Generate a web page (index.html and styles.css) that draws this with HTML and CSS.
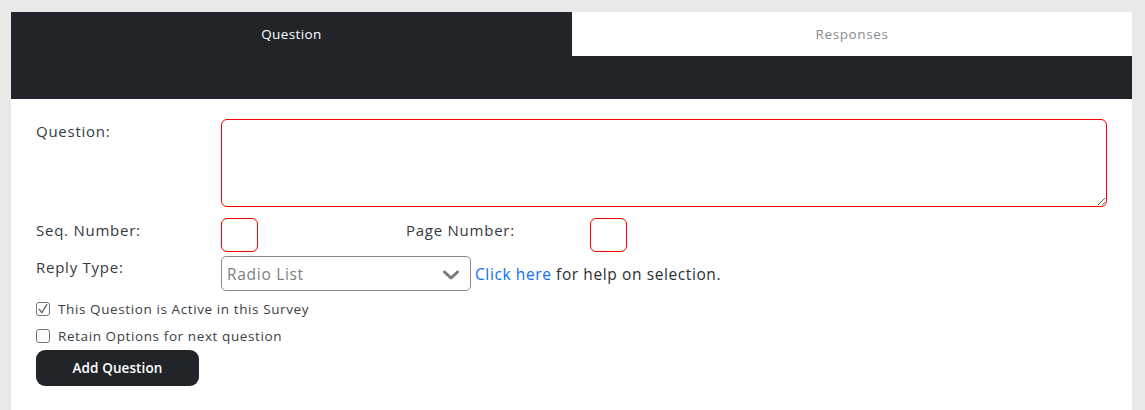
FILE: index.html
```html
<!DOCTYPE html>
<html>
<head>
<meta charset="utf-8">
<link rel="stylesheet" href="styles.css">
</head>
<body>
<div class="card">
  <div class="tabs">
    <div class="tab active">Question</div>
    <div class="tab">Responses</div>
  </div>
  <div class="form">
    <div class="row row-question">
      <label class="lbl">Question:</label>
      <textarea class="field textarea"></textarea>
    </div>
    <div class="row row-nums">
      <label class="lbl">Seq. Number:</label>
      <input class="field small" type="text">
      <label class="lbl lbl-page">Page Number:</label>
      <input class="field small" type="text">
    </div>
    <div class="row row-reply">
      <label class="lbl">Reply Type:</label>
      <div class="select">
        <span class="select-text">Radio List</span>
        <svg class="chev" width="18" height="12" viewBox="0 0 18 12"><path d="M2.5 3 L9 9 L15.5 3" fill="none" stroke="#7a7a7a" stroke-width="3" stroke-linecap="round" stroke-linejoin="round"/></svg>
      </div>
      <span class="help"><a class="link">Click here</a> for help on selection.</span>
    </div>
    <div class="check">
      <span class="box"><svg width="14" height="14" viewBox="0 0 14 14"><path d="M3.2 7.2 L5.8 10.6 L10.8 2.6" fill="none" stroke="#6b6b6b" stroke-width="1.4" stroke-linecap="round" stroke-linejoin="round"/></svg></span>
      <span class="check-text">This Question is Active in this Survey</span>
    </div>
    <div class="check">
      <span class="box"></span>
      <span class="check-text">Retain Options for next question</span>
    </div>
    <button class="btn">Add Question</button>
  </div>
</div>
</body>
</html>
```
FILE: styles.css
```css
* { box-sizing: border-box; }
html, body { margin: 0; height: 100%; }
body {
  background: #e9e9e9;
  padding: 12px 13px 0 11px;
  font-family: "Open Sans", "Noto Sans", sans-serif;
  color: #333a40;
}
.card {
  background: #fff;
  height: 100%;
}
.tabs {
  display: grid;
  grid-template-columns: 561px 1fr;
  background: #212529;
  height: 87px;
  align-items: start;
}
.tab {
  height: 44px;
  line-height: 44px;
  text-align: center;
  font-size: 13.5px;
  letter-spacing: 0.6px;
  color: #888c90;
}
.tab.active { color: #fff; font-weight: 500; letter-spacing: 0.4px; }
.tab:not(.active) { background: #fff; }
.form {
  padding: 20px 25px 0 25px;
}
.row { display: flex; align-items: flex-start; }
.lbl {
  width: 185px;
  font-size: 15px;
  letter-spacing: 0.75px;
  color: #343a40;
  padding-top: 2px;
}
.lbl-page { width: 184px; margin-left: 148px; }
.field {
  border: 1px solid #ff0000;
  border-radius: 6px;
  background: #fff;
  font-family: inherit;
  outline: none;
}
.textarea {
  flex: 1;
  height: 88px;
  resize: vertical;
  display: block;
}
.row-nums { margin-top: 11px; }
.small { width: 37px; height: 34px; padding: 0; }
.row-reply { margin-top: 4px; align-items: center; }
.row-reply .lbl { align-self: flex-start; padding-top: 1px; }
.select {
  width: 250px;
  height: 35px;
  border: 1px solid #8a8a8a;
  border-radius: 5px;
  display: flex;
  align-items: center;
  justify-content: space-between;
  padding: 0 10px 0 5px;
  font-size: 15.5px;
  letter-spacing: 0.7px;
  color: #7b7f83;
}
.chev { display: block; margin-top: 2px; }
.help { margin-left: 4px; font-size: 15.5px; letter-spacing: 0.6px; color: #2a2f33; }
.link { color: #0d6efd; text-decoration: none; }
.check {
  display: flex;
  align-items: center;
  height: 27px;
  margin-top: 0;
}
.row-reply + .check { margin-top: 4px; }
.box {
  width: 14px;
  height: 14px;
  border: 1px solid #767676;
  border-radius: 3px;
  background: #fff;
  margin-right: 8px;
  display: block;
  position: relative;
}
.box svg { position: absolute; left: -1px; top: -1px; }
.check-text { font-size: 13.5px; letter-spacing: 0.6px; color: #3a3f44; }
.btn {
  margin-top: 1px;
  width: 163px;
  height: 36px;
  background: #212529;
  color: #fff;
  border: none;
  border-radius: 9px;
  font-family: inherit;
  font-size: 13.5px;
  font-weight: 600;
  letter-spacing: 0.1px;
}
```
